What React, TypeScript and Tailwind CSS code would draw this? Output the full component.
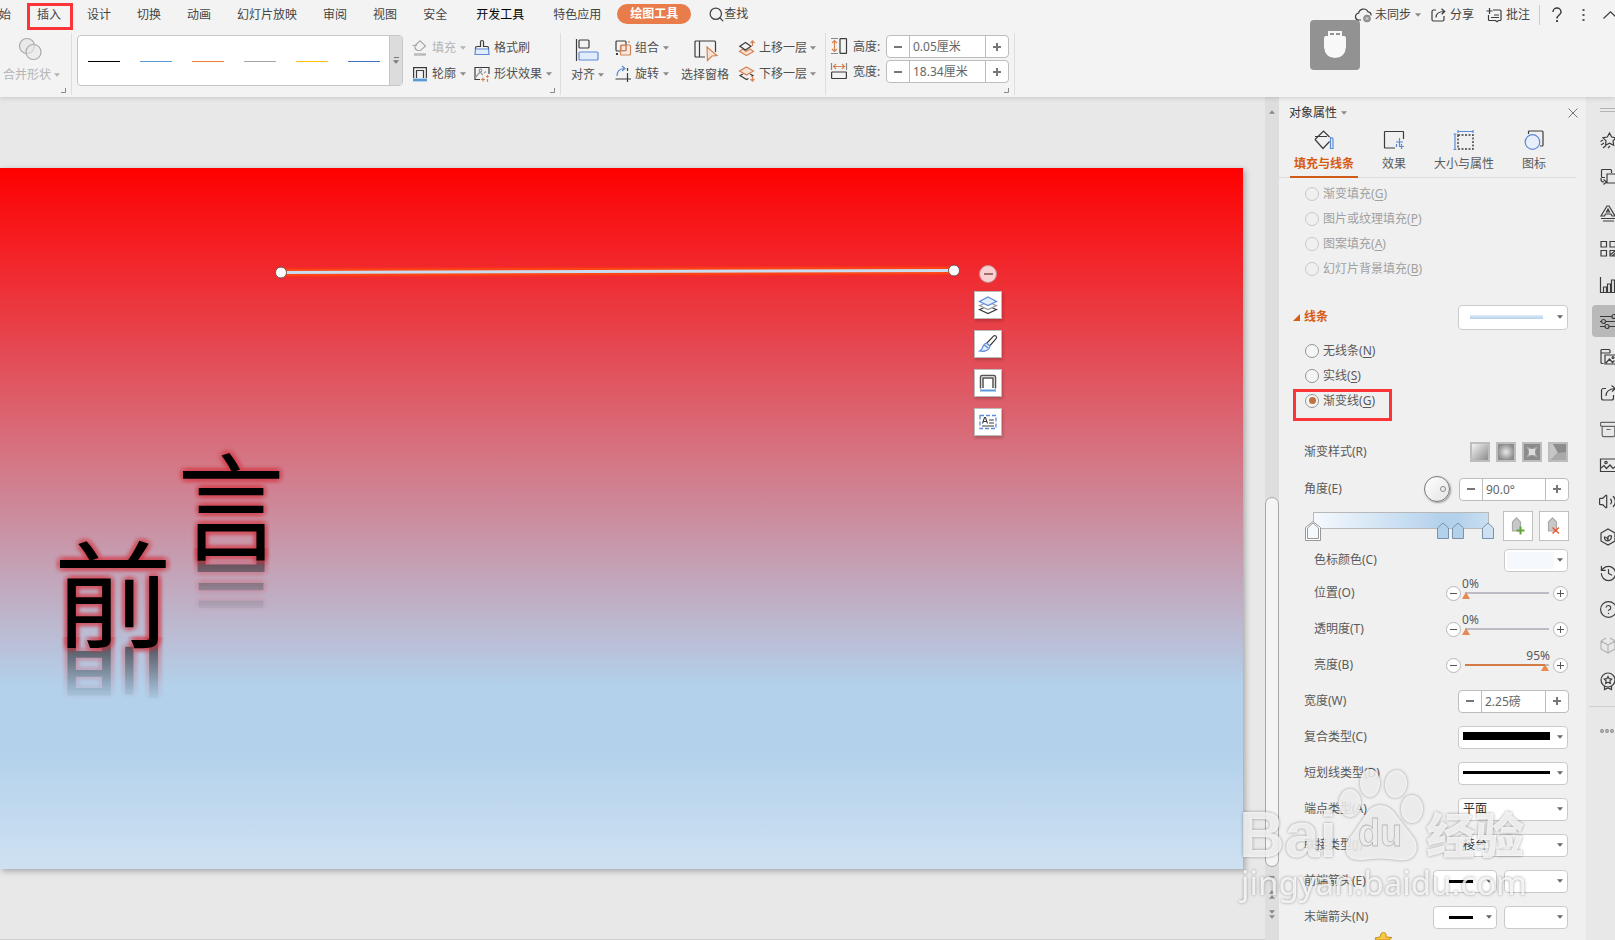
import type { ReactNode } from "react";
import { Archive, CircleHelp, History, Search, Volume2 } from "lucide-react";

const FONT = "font-['Noto_Sans','Noto_Sans_CJK_SC',sans-serif]";

function Caret({className = "text-[#8a8a8a]"}: {className?: string}) {
  return (
    <svg width="6" height="4" viewBox="0 0 6 4" className={`shrink-0 ${className}`}>
      <path d="M0 0.3h6L3 3.8z" fill="currentColor" />
    </svg>
  );
}

function Svg({w = 16, h = 16, className = "", children}: {w?: number; h?: number; className?: string; children: ReactNode}) {
  return (
    <svg
      width={w}
      height={h}
      viewBox={`0 0 ${w} ${h}`}
      fill="none"
      stroke="#3c3c3c"
      strokeWidth="1.2"
      className={`shrink-0 overflow-visible ${className}`}
    >
      {children}
    </svg>
  );
}

function Corner() {
  return (
    <svg width="5" height="5" viewBox="0 0 5 5" className="absolute bottom-[2px] right-[5px]">
      <path d="M4.5 0v4.5H0" fill="none" stroke="#888" />
    </svg>
  );
}

function Plus({size = 9, className = "bg-[#777]"}: {size?: number; className?: string}) {
  return (
    <span className="relative block shrink-0" style={{width: size, height: size}}>
      <span className={`absolute inset-x-0 top-[calc(50%-1px)] h-[2px] ${className}`} />
      <span className={`absolute inset-y-0 left-[calc(50%-1px)] w-[2px] ${className}`} />
    </span>
  );
}

function Spinner({value, className}: {value: string; className: string}) {
  return (
    <div className={`flex h-[23px] shrink-0 rounded-[4px] border border-[#bdbdbd] bg-white text-[#666] ${className}`}>
      <span className="flex w-[23px] items-center justify-center border-r border-[#bdbdbd]">
        <span className="h-[2px] w-[8px] bg-[#777]" />
      </span>
      <span className="flex-1 pl-[3px] leading-[21px]">{value}</span>
      <span className="flex w-[23px] items-center justify-center border-l border-[#bdbdbd]">
        <Plus size={8} />
      </span>
    </div>
  );
}

const tabs = [
  {name: "插入", cls: "ml-[26px]"},
  {name: "设计", cls: "ml-[26px]"},
  {name: "切换", cls: "ml-[26px]"},
  {name: "动画", cls: "ml-[26px]"},
  {name: "幻灯片放映", cls: "ml-[26px]"},
  {name: "审阅", cls: "ml-[26px]"},
  {name: "视图", cls: "ml-[26px]"},
  {name: "安全", cls: "ml-[26px]"},
  {name: "开发工具", cls: "ml-[29px] text-black"},
  {name: "特色应用", cls: "ml-[29px]"},
];

function MenuBar() {
  return (
    <div className="flex h-[30px] items-center whitespace-nowrap text-[#444]">
      <span className="-ml-px">始</span>
      {tabs.map((t, i) => (
        <span key={t.name} className={`relative ${t.cls}`}>
          {t.name}
          {i === 0 && <span className="absolute -left-[10px] -top-[3px] h-[27px] w-[46px] border-[3px] border-[#fb3538]" />}
        </span>
      ))}
      <span className="-mt-[2px] ml-4 h-5 w-[74px] rounded-full bg-[#e87c4a] text-center font-bold leading-5 text-white">
        绘图工具
      </span>
      <Search size={17} strokeWidth={1.8} className="-mt-[2px] ml-[17px] text-[#444]" />
      <span className="-mt-[2px] -ml-px">查找</span>

      <div className="ml-auto flex items-center">
        <Svg w={17} h={14}>
          <path d="M6 12H4.200A3.400 3.400 0 0 1 3.600 5.200 5 5 0 0 1 13 3.800 3.400 3.400 0 0 1 16 7.500" />
          <circle cx="12" cy="10.500" r="3.200" fill="#999" stroke="#888" />
          <path d="M10.800 9.300l2.400 2.400m0-2.400l-2.400 2.400" stroke="#f3f3f3" strokeWidth="0.800" />
        </Svg>
        <span className="ml-[3px]">未同步</span>
        <Caret className="ml-1 text-[#8a8a8a]" />
        <Svg w={15} h={14} className="ml-[10px]">
          <path d="M5 2H2.500A1.500 1.500 0 0 0 1 3.500v8A1.500 1.500 0 0 0 2.500 13h9a1.500 1.500 0 0 0 1.500-1.500V8M5 9.500C5 6 7.500 3.500 13.500 3.500M10.500 0.800l3.200 2.700-3 2.700" />
        </Svg>
        <span className="ml-1">分享</span>
        <Svg w={16} h={14} className="ml-[12px]">
          <path d="M7 2h7a1 1 0 0 1 1 1v8.500a1 1 0 0 1-1 1h-1.500l-1.500 1.200-1.500-1.200H3.500a1 1 0 0 1-1-1V7M3.500 0v6M0.500 3h6M5 9.500h8M8 7h5" />
        </Svg>
        <span className="ml-[4px]">批注</span>
        <span className="ml-[9px] h-5 w-px bg-[#ccc]" />
        <Svg w={10} h={14} className="ml-[12px]">
          <path d="M1 4A4 4 0 0 1 9 4C9 7 5 7 5 10.500" strokeWidth="1.500" />
          <path d="M5 12v2" strokeWidth="1.800" />
        </Svg>
        <Svg w={3} h={12} className="ml-[20px]">
          <path d="M0.500 1h2M0.500 6h2M0.500 11h2" strokeWidth="2" stroke="#555" />
        </Svg>
        <Svg w={14} h={8} className="-mr-[2px] ml-[18px]">
          <path d="M0.500 7.500L7.500 0.800l7 6.700" />
        </Svg>
      </div>
    </div>
  );
}

const lineColors = ["bg-black", "bg-[#5b9bd5]", "bg-[#ed7d31]", "bg-[#a5a5a5]", "bg-[#ffc000]", "bg-[#4472c4]"];

function LayerIcon({down = false}: {down?: boolean}) {
  return down ? (
    <Svg>
      <path d="M4 8L1 9.500l6.500 4 2-1M11 8l3 1.500-1.500 1" />
      <path d="M7.500 1l7 4-7 4-7-4z" fill="#f8e2d6" stroke="#d48453" />
      <path d="M13.500 10v5M11.500 13l2 2.200 2-2.200" stroke="#d48453" />
    </Svg>
  ) : (
    <Svg>
      <path d="M4 9l-3.500 2.500 7 4 7-4L11 9l-4 2.500z" fill="#f8e2d6" stroke="#d48453" />
      <path d="M6.500 2.500l5.500 3.800-5.500 3.800L0.800 6.300z" />
      <path d="M13.500 6V0.800M11.500 3l2-2.200 2 2.200" stroke="#d48453" />
    </Svg>
  );
}

function Ribbon() {
  return (
    <div className="flex h-[67px] whitespace-nowrap pt-[3px] text-[#505050]">
      <div className="relative h-[62px] w-[72px] border-r border-[#dedede] text-[#b4b4b4]">
        <Svg w={24} h={24} className="ml-[18px] mt-[4px]">
          <circle cx="9" cy="9" r="7.500" stroke="#aaa" fill="#e9e9e9" />
          <circle cx="15.500" cy="15" r="7.500" stroke="#aaa" fill="#e9e9e9" fillOpacity="0.600" />
        </Svg>
        <div className="mt-[6px] flex items-center gap-[3px] pl-[3px] leading-4">
          合并形状
          <Caret className="text-[#b4b4b4]" />
        </div>
        <Corner />
      </div>

      <div className="relative flex h-[62px] w-[489px] border-r border-[#dedede]">
        <div className="ml-[5px] mt-[2px] flex h-[51px] w-[326px] overflow-hidden rounded-[4px] border border-[#c6c6c6] bg-white">
          <div className="flex flex-1 items-center gap-[20px] pl-[10px]">
            {lineColors.map((c) => (
              <span key={c} className={`mt-[2px] h-px w-[32px] ${c}`} />
            ))}
          </div>
          <div className="flex w-[13px] flex-col items-center justify-center gap-[2px] border-l border-[#c6c6c6] bg-[#dcdcdc]">
            <span className="h-px w-[5px] bg-[#777]" />
            <Caret className="text-[#777]" />
          </div>
        </div>
        <div className="ml-[9px] mt-[2px] flex flex-col">
          <div className="flex h-[26px] items-center">
            <span className="flex w-[62px] items-center text-[#b4b4b4]">
              <Svg>
                <path d="M3 5.500L8 0.800l5.500 5.200-5 4.500H5.500A4.500 4.500 0 0 1 3 5.500M0.500 5.500H5" stroke="#aaa" />
                <path d="M2 14.500h12" stroke="#bbb" strokeWidth="2.500" />
              </Svg>
              <span className="ml-[4px] mr-[4px]">填充</span>
              <Caret className="text-[#b4b4b4]" />
            </span>
            <Svg>
              <path d="M1.500 9.500V8q0-1.500 1.500-1.500h3.500V2a1.500 1.500 0 0 1 3 0v4.500H13q1.500 0 1.500 1.500v1.500" />
              <path d="M1.500 9h13l0.500 5.500H1z" fill="#e2ecfa" stroke="#5b8ad8" />
            </Svg>
            <span className="ml-[4px]">格式刷</span>
          </div>
          <div className="flex h-[26px] items-center">
            <span className="flex w-[62px] items-center">
              <Svg>
                <path d="M1.600 12V1.600h12.800V12M4.500 12V4.500h7V12" strokeWidth="1.200" />
                <path d="M1 14h14" stroke="#5b9bd5" strokeWidth="2.800" />
              </Svg>
              <span className="ml-[4px] mr-[4px]">轮廓</span>
              <Caret />
            </span>
            <Svg>
              <path d="M6 13.500H1V1.500h14V8" />
              <path d="M1 12l5-6 3 3M10 7l2-1.500" stroke="#999" />
              <circle cx="6.500" cy="4.500" r="1.300" stroke="#999" />
              <path d="M9 11.500v4M7 13.500h4M13.500 9v3M12 10.500h3M13.500 13v3" stroke="#d48453" />
            </Svg>
            <span className="ml-[4px] mr-[4px]">形状效果</span>
            <Caret />
          </div>
        </div>
        <Corner />
      </div>

      <div className="flex h-[62px] w-[265px] border-r border-[#dedede]">
        <div className="ml-[10px] w-[44px]">
          <Svg w={24} h={24} className="ml-[4px] mt-[5px]">
            <path d="M1.500 1v22" />
            <rect x="4" y="2" width="10" height="8" rx="1" />
            <rect x="4" y="14" width="19" height="8" rx="1" fill="#e2ecfa" stroke="#5b8ad8" />
          </Svg>
          <div className="mt-[5px] flex items-center gap-[3px] leading-4">
            对齐
            <Caret />
          </div>
        </div>
        <div className="mt-[2px] w-[66px]">
          <div className="flex h-[26px] items-center">
            <Svg>
              <rect x="1" y="1" width="10" height="10" rx="1" />
              <rect x="5.500" y="5" width="10" height="10" rx="1" stroke="#d48453" fill="#f8e2d6" fillOpacity="0.600" />
              <path d="M6 5.500h5v5H6zM14 1v2" stroke="#d48453" />
              <path d="M1 14h2" strokeWidth="2" />
            </Svg>
            <span className="ml-[4px] mr-[4px]">组合</span>
            <Caret />
          </div>
          <div className="flex h-[26px] items-center">
            <Svg>
              <path d="M0.500 13H16M12.500 2v3M12.500 7v9" />
              <path d="M2 10q0-7 7-7.500M7 0l3 2.500L7 5" stroke="#5b8ad8" />
            </Svg>
            <span className="ml-[4px] mr-[4px]">旋转</span>
            <Caret />
          </div>
        </div>
        <div className="w-[58px]">
          <Svg w={24} h={24} className="ml-[13px] mt-[6px]">
            <path d="M11 18H2q-1 0-1-1V3q0-1 1-1h18.500q1 0 1 1v10M5.500 2v16" />
            <path d="M13 8l10 8.500-5 0.500-4.500 4.500z" fill="#f8e2d6" stroke="#d48453" />
          </Svg>
          <div className="mt-[4px] leading-4">选择窗格</div>
        </div>
        <div className="mt-[2px]">
          <div className="flex h-[26px] items-center">
            <LayerIcon />
            <span className="ml-[4px] mr-[3px]">上移一层</span>
            <Caret />
          </div>
          <div className="flex h-[26px] items-center">
            <LayerIcon down />
            <span className="ml-[4px] mr-[3px]">下移一层</span>
            <Caret />
          </div>
        </div>
      </div>

      <div className="relative h-[62px] w-[189px] border-r border-[#dedede] pl-[5px] pt-[2px]">
        <div className="flex h-[25px] items-start">
          <Svg className="mt-[3px]">
            <path d="M0 0.500h7M0 15.500h7" stroke="#888" />
            <path d="M3.500 2.500v11M1 5l2.500-2.500L6 5M1 11l2.500 2.500L6 11" stroke="#d48453" />
            <rect x="9" y="0.600" width="6.500" height="14.800" rx="0.500" />
          </Svg>
          <span className="ml-[6px] w-[33px] leading-[23px]">高度:</span>
          <Spinner value="0.05厘米" className="w-[123px]" />
        </div>
        <div className="flex h-[25px] items-start">
          <Svg className="mt-[3px]">
            <path d="M0.500 0v7M15.500 0v7" stroke="#888" />
            <path d="M2.500 3.500h11M5 1L2.500 3.500 5 6M11 1l2.500 2.500L11 6" stroke="#d48453" />
            <rect x="0.600" y="9" width="14.800" height="6.500" rx="0.500" />
          </Svg>
          <span className="ml-[6px] w-[33px] leading-[23px]">宽度:</span>
          <Spinner value="18.34厘米" className="w-[123px]" />
        </div>
        <Corner />
      </div>
    </div>
  );
}

const glow = {
  textShadow: [
    "4px 0 3px rgba(212,50,62,.26)",
    "-4px 0 3px rgba(212,50,62,.26)",
    "0 4px 3px rgba(212,50,62,.26)",
    "0 -4px 3px rgba(212,50,62,.26)",
    "3px 3px 3px rgba(212,50,62,.26)",
    "-3px 3px 3px rgba(212,50,62,.26)",
    "3px -3px 3px rgba(212,50,62,.26)",
    "-3px -3px 3px rgba(212,50,62,.26)",
  ].join(","),
};

// one heading character with its mirrored copy starting at the axis line
function WordArt({char, className, axis}: {char: string; className: string; axis: number}) {
  return (
    <div className={`absolute w-[116px] text-center text-[116px] font-normal leading-[116px] text-black ${className}`}>
      <div
        className="absolute -inset-x-3 h-[72px] overflow-hidden opacity-60"
        style={{top: axis, maskImage: "linear-gradient(to bottom, #000 4px, transparent 66px)"}}
        aria-hidden
      >
        <div className="-scale-y-100" style={{marginTop: axis - 116, ...glow}}>
          {char}
        </div>
      </div>
      <div className="relative" style={glow}>
        {char}
      </div>
    </div>
  );
}

function FloatButton({children}: {children: ReactNode}) {
  return (
    <div className="flex size-[28px] items-center justify-center border border-[#bbb] bg-white shadow-[1px_2px_3px_rgba(0,0,0,0.2)]">
      {children}
    </div>
  );
}

function Canvas() {
  return (
    <div className="flex w-[1265px] shrink-0 flex-col border-b border-[#cfcfcf] bg-[#e8e8e8] pt-[71px]">
      <div className="relative h-[701px] w-[1243px] bg-[linear-gradient(to_bottom,#ff0000_0%,#b3d1eb_74%,#b3d1eb_83%,#cee1f2_100%)] shadow-[2px_2px_6px_rgba(0,0,0,0.3)]">
        <svg width="700" height="24" viewBox="0 0 700 24" className="absolute left-[268px] top-[91px]">
          <path d="M12 13.500L686 11.500" stroke="#ff3a14" strokeWidth="10" opacity="0.450" />
          <path d="M12 13.500L686 11.500" stroke="#ff4a14" strokeWidth="7" opacity="0.850" />
          <path d="M12 13.500L686 11.500" stroke="#c9dcf0" strokeWidth="3" />
          <circle cx="13" cy="13.500" r="5.500" fill="#fff" stroke="#6b5050" />
          <circle cx="686" cy="11.500" r="5.500" fill="#fff" stroke="#6b5050" />
        </svg>

        <WordArt char="言" className="left-[173px] top-[280px] scale-x-[0.925]" axis={100} />
        <WordArt char="前" className="left-[55px] top-[368px] scale-x-[1.02]" axis={101} />

        <div className="absolute left-[974px] top-[97px] flex flex-col items-center">
          <span className="flex size-[18px] items-center justify-center rounded-full border border-[#c09090] bg-[#fbd0d2]">
            <span className="h-[2px] w-[9px] bg-[#a07070]" />
          </span>
          <div className="mt-[8px] flex flex-col gap-[11px]">
            <FloatButton>
              <Svg w={18} h={18}>
                <path d="M4.500 12L0.500 13.500l8.500 4 8.500-4-4-1.500" />
                <path d="M4.500 8L0.500 9.500l8.500 4 8.500-4-4-1.500" stroke="#999" />
                <path d="M9 1l8.500 4.500L9 9.500 0.500 5.500z" fill="#e2ecfa" stroke="#5b8ad8" />
              </Svg>
            </FloatButton>
            <FloatButton>
              <Svg w={18} h={18}>
                <path d="M8 8l6.500-6.800a1.700 1.700 0 0 1 2.600 2.400L11 10.500" />
                <path d="M7.500 8l3.500 3-1 2.500Q7 17.500 0.500 16q3-1.500 3.200-4Q5 8.500 7.500 8zM5.500 10l3.500 3" fill="#e2ecfa" stroke="#5b8ad8" />
              </Svg>
            </FloatButton>
            <FloatButton>
              <Svg w={18} h={18}>
                <path d="M1.500 14.500V3q0-1.500 1.500-1.500h12q1.500 0 1.500 1.500v11.500M4 14V4h10v10" strokeWidth="1.500" stroke="#555" />
                <path d="M1 16.500h16" stroke="#5b9bd5" strokeWidth="2" />
              </Svg>
            </FloatButton>
            <FloatButton>
              <Svg w={18} h={18}>
                <rect x="1" y="2.500" width="16" height="13" stroke="#5b8ad8" strokeWidth="1.300" strokeDasharray="4 2" />
                <path d="M3.500 10.500l2-6h1l2 6M4.500 8.500h3M10 7h5M10 10h5M3 13h12" strokeWidth="1.100" />
              </Svg>
            </FloatButton>
          </div>
        </div>
      </div>
    </div>
  );
}

function ScrollBar() {
  return (
    <div className="flex w-[14px] shrink-0 flex-col items-center bg-[#dedede] pt-[13px] text-[#888]">
      <Caret className="rotate-180" />
      <div className="mt-[383px] h-[370px] w-[14px] shrink-0 rounded-full border border-[#a8a8a8] bg-[#f4f4f4]" />
      <Caret className="mt-[9px] text-[#888]" />
      <div className="mt-[10px] flex rotate-180 flex-col gap-px">
        <Caret />
        <Caret />
      </div>
      <div className="mt-[11px] flex flex-col gap-px">
        <Caret />
        <Caret />
      </div>
    </div>
  );
}

function RadioRow({label, hotkey, disabled = false, checked = false, children}: {
  label: string;
  hotkey: string;
  disabled?: boolean;
  checked?: boolean;
  children?: ReactNode;
}) {
  return (
    <div className={`relative flex h-[25px] items-center pl-[26px] ${disabled ? "text-[#a0a0a0]" : "text-[#5a5a5a]"}`}>
      <span
        className={`flex size-[14px] items-center justify-center rounded-full border ${
          disabled ? "border-[#c8c8c8]" : "border-[#959595] bg-[#f6f6f6]"
        }`}
      >
        {checked && <span className="size-[7px] rounded-full bg-[#c0713f]" />}
      </span>
      <span className="ml-[4px]">
        {label}(<span className="underline underline-offset-2">{hotkey}</span>)
      </span>
      {children}
    </div>
  );
}

function Row({label, indent = false, className = "h-[36px]", children}: {
  label: string;
  indent?: boolean;
  className?: string;
  children: ReactNode;
}) {
  return (
    <div className={`flex shrink-0 items-center pr-[18px] text-[#5a5a5a] ${indent ? "pl-[35px]" : "pl-[25px]"} ${className}`}>
      <span className="mr-auto">{label}</span>
      {children}
    </div>
  );
}

function Select({className = "w-[110px]", children}: {className?: string; children?: ReactNode}) {
  return (
    <div className={`flex h-[23px] shrink-0 items-center rounded-[4px] border border-[#cacaca] bg-white pl-[4px] pr-[4px] text-[#333] ${className}`}>
      {children}
      <Caret className="ml-auto text-[#666]" />
    </div>
  );
}

function Slider({value}: {value: number}) {
  const btn = "flex size-[15px] items-center justify-center rounded-full border border-[#b8b8b8] bg-white";
  return (
    <div className="flex items-center">
      <span className={btn}>
        <span className="h-px w-[7px] bg-[#555]" />
      </span>
      <div className="relative mx-[4px] h-[2px] w-[84px] bg-[#bcbcc4]">
        <div className="h-full bg-[#d27b45]" style={{width: `${value}%`}} />
        <span className={`absolute top-[-15px] leading-[14px] ${value > 50 ? "-right-px" : "-left-[3px]"}`}>{value}%</span>
        <svg width="8" height="7" viewBox="0 0 8 7" className="absolute top-0" style={{left: value * 0.83 - 3}}>
          <path d="M4 0l4 7H0z" fill="#e58b52" />
        </svg>
      </div>
      <span className={btn}>
        <Svg w={7} h={7}>
          <path d="M0 3.500h7M3.500 0v7" strokeWidth="1" stroke="#555" />
        </Svg>
      </span>
    </div>
  );
}

const panelTabs = [
  {
    name: "填充与线条",
    icon: (
      <Svg w={20} h={20}>
        <path d="M1 9.500L9.500 1l6 6M1 9.500l8 9 6.500-7M1 6.500h12" />
        <path d="M16.500 7.500q3 0 2.500 3v8h-2.500z" stroke="#5b8ad8" />
      </Svg>
    ),
  },
  {
    name: "效果",
    icon: (
      <Svg w={20} h={20}>
        <path d="M11 18H1q-0.500 0-0.500-0.500V2Q0.500 1.500 1 1.500h18q0.500 0 0.500 0.500v7" />
        <path d="M15.500 8v8M12 12h7M17.500 14v5M15 16.500h5M12.500 14v3" stroke="#5b8ad8" />
      </Svg>
    ),
  },
  {
    name: "大小与属性",
    icon: (
      <Svg w={20} h={20}>
        <rect x="4" y="5" width="15" height="14" strokeDasharray="2 1.500" strokeWidth="1.400" />
        <path d="M4 1.500h15M4 0v3M19 0v3M1 4v15.500M-0.500 4h3M-0.500 19.500h3" stroke="#5b8ad8" />
      </Svg>
    ),
  },
  {
    name: "图标",
    icon: (
      <Svg w={20} h={20}>
        <path d="M4.500 4V2q0-1 1-1H18q1 0 1 1v13q0 1-1 1h-2" />
        <circle cx="8.500" cy="12" r="7.300" stroke="#5b8ad8" fill="#e8effb" />
      </Svg>
    ),
  },
];

function Swatches() {
  const box = "size-[20px] border-2 border-[#bdbdbd]";
  return (
    <>
      <span className={`${box} bg-[linear-gradient(135deg,#f2f2f2,#8c8c8c)]`} />
      <span className={`${box} bg-[radial-gradient(circle,#e8e8e8,#8c8c8c_75%)]`} />
      <svg width="20" height="20" viewBox="0 0 20 20" className="shrink-0">
        <path d="M0 0h20v20H0z" fill="#bdbdbd" />
        <path d="M2 2h16v16H2z" fill="#8c8c8c" />
        <path d="M4.500 4.500L10 7l5.500-2.500L13 10l2.500 5.500L10 13l-5.500 2.500L7 10z" fill="#b4b4b4" />
        <path d="M7 7h6v6H7z" fill="#dcdcdc" />
      </svg>
      <svg width="20" height="20" viewBox="0 0 20 20" className="shrink-0">
        <path d="M0 0h20v20H0z" fill="#bdbdbd" />
        <path d="M2 2h16v16H2z" fill="#a9a9a9" />
        <path d="M2 2h3l5 8-8 8z" fill="#c6c6c6" />
        <path d="M5 2h13v8l-8 1z" fill="#8c8c8c" />
      </svg>
    </>
  );
}

function GradientStop({className, active = false}: {className: string; active?: boolean}) {
  return (
    <svg width="16" height="20" viewBox="0 0 16 20" className={`absolute ${className}`}>
      {active && <path d="M0.500 19.500V6.500L8 0.500l7.500 6v13z" fill="#fff" stroke="#999" />}
      <path d="M2.500 17.500V7L8 2l5.500 5v10.500z" fill="currentColor" stroke={active ? "#999" : "#7a93ab"} />
    </svg>
  );
}

function StopButton({remove = false}: {remove?: boolean}) {
  return (
    <span className="ml-[6px] flex size-[30px] shrink-0 items-center justify-center border border-[#c0c0c0] bg-white">
      <Svg w={14} h={18}>
        <path d="M1.500 14V5L5.500 0.800 9.500 5v9z" fill="#c8c8c8" stroke="#aaa" />
        {remove ? (
          <path d="M5.500 10.500l6.500 6M12 10.500l-6.500 6" stroke="#f0532d" strokeWidth="1.300" />
        ) : (
          <path d="M9.500 9.500v8M5.500 13.500h8" stroke="#62a63a" strokeWidth="2" />
        )}
      </Svg>
    </span>
  );
}

function PropertyPanel() {
  return (
    <div className="flex w-[307px] shrink-0 flex-col overflow-hidden bg-[#f0f0f0]">
      <div className="flex h-[31px] shrink-0 items-center pl-[10px] pr-[8px] text-[#333]">
        对象属性
        <Caret className="ml-[4px] text-[#8a8a8a]" />
        <Svg w={10} h={10} className="ml-auto">
          <path d="M0.500 0.500l9 9M9.500 0.500l-9 9" stroke="#777" strokeWidth="1" />
        </Svg>
      </div>
      <div className="mr-[10px] flex h-[50px] shrink-0 pl-[10px] shadow-[inset_0_-1px_0_#dcdcdc]">
        {panelTabs.map((t, i) => (
          <div key={t.name} className="flex w-[70px] shrink-0 flex-col items-center pt-[2px] text-[#5a5a5a]">
            {t.icon}
            <span className={`mt-[6px] leading-4 ${i === 0 ? "font-bold text-[#d75b13]" : ""}`}>{t.name}</span>
            {i === 0 && <span className="mt-auto h-[2px] w-[68px] bg-[#d05a17]" />}
          </div>
        ))}
      </div>

      <div className="pt-[3px]">
        <RadioRow label="渐变填充" hotkey="G" disabled />
        <RadioRow label="图片或纹理填充" hotkey="P" disabled />
        <RadioRow label="图案填充" hotkey="A" disabled />
        <RadioRow label="幻灯片背景填充" hotkey="B" disabled />
      </div>

      <div className="mt-[18px] flex h-[36px] shrink-0 items-center pl-[14px] pr-[18px] font-bold text-[#d75b13]">
        <Svg w={7} h={7} className="mr-[4px]">
          <path d="M7 0v7H0z" fill="#d75b13" stroke="none" />
        </Svg>
        线条
        <div className="ml-auto flex h-[25px] w-[110px] items-center rounded-[4px] border border-[#cacaca] bg-white pl-[11px] pr-[4px]">
          <span className="h-[4px] w-[73px] bg-[linear-gradient(#e2edf7,#b3d0ea)]" />
          <Caret className="ml-auto text-[#666]" />
        </div>
      </div>
      <div className="mt-[3px]">
        <RadioRow label="无线条" hotkey="N" />
        <RadioRow label="实线" hotkey="S" />
        <RadioRow label="渐变线" hotkey="G" checked>
          <span className="absolute left-[14px] top-px h-[32px] w-[99px] border-[3px] border-[#fb3538]" />
        </RadioRow>
      </div>

      <Row label="渐变样式(R)" className="mt-[21px] h-[36px] gap-[6px]">
        <Swatches />
      </Row>
      <Row label="角度(E)" className="mt-px h-[36px]">
        <span className="mr-[9px] flex size-[26px] items-center justify-end rounded-full border border-[#777] bg-[linear-gradient(135deg,#fff,#e4e4e4)] pr-[3px] shadow-[1px_1px_2px_rgba(0,0,0,0.35)]">
          <span className="size-[6px] rounded-full border border-[#888]" />
        </span>
        <Spinner value="90.0°" className="-mr-px w-[110px]" />
      </Row>
      <div className="mt-[4px] flex h-[30px] shrink-0 pl-[34px]">
        <div className="relative mr-[8px] mt-px h-[17px] w-[176px] border border-[#b8b8b8] bg-[linear-gradient(to_right,#f5f9fe,#b3d1eb_74%,#b3d1eb_82%,#c9def1)]">
          <GradientStop active className="-left-[9px] top-[8px] text-[#f4f9fe]" />
          <GradientStop className="left-[121px] top-[8px] text-[#b3d1eb]" />
          <GradientStop className="left-[136px] top-[8px] text-[#b3d1eb]" />
          <GradientStop className="left-[166px] top-[8px] text-[#cee1f2]" />
        </div>
        <StopButton />
        <StopButton remove />
      </div>
      <Row label="色标颜色(C)" indent className="mt-[4px] h-[30px]">
        <Select className="w-[64px]">
          <span className="-ml-[2px] h-[17px] w-[47px] bg-[#f5f9fe]" />
        </Select>
      </Row>
      <Row label="位置(O)" indent>
        <Slider value={0} />
      </Row>
      <Row label="透明度(T)" indent>
        <Slider value={0} />
      </Row>
      <Row label="亮度(B)" indent>
        <Slider value={95} />
      </Row>
      <Row label="宽度(W)">
        <Spinner value="2.25磅" className="-mr-px w-[111px]" />
      </Row>
      <Row label="复合类型(C)">
        <Select>
          <span className="-mt-[2px] h-[8px] w-[87px] bg-black" />
        </Select>
      </Row>
      <Row label="短划线类型(D)">
        <Select>
          <span className="-mt-[2px] h-[3px] w-[87px] bg-black" />
        </Select>
      </Row>
      <Row label="端点类型(A)">
        <Select>平面</Select>
      </Row>
      <Row label="联接类型(J)">
        <Select>棱台</Select>
      </Row>
      <Row label="前端箭头(E)">
        <Select className="mr-[7px] w-[64px]">
          <span className="ml-[11px] h-[3px] w-[24px] bg-black" />
        </Select>
        <Select className="w-[64px]" />
      </Row>
      <Row label="末端箭头(N)">
        <Select className="mr-[7px] w-[64px]">
          <span className="ml-[11px] h-[3px] w-[24px] bg-black" />
        </Select>
        <Select className="w-[64px]" />
      </Row>
    </div>
  );
}

const lucide = {size: 19, strokeWidth: 1.5};

const sideIcons: ReactNode[] = [
  <Svg w={20} h={18}>
    <path d="M9.500 1l2.200 4 4.300 0.700-3 3.200 0.600 4.300-4.100-2-4 2 0.500-4.300-3-3.200L7.300 5zM0.500 9.500L3 8M1 13l3-2M3 16l3-2.500M8 16l2-2" />
  </Svg>,
  <Svg w={20} h={18}>
    <path d="M5 9.500H2.500a1 1 0 0 1-1-1v-6a1 1 0 0 1 1-1h8a1 1 0 0 1 1 1V5M7 6h11v9H7zM1 10v1.500q0 2.500 3 2.500M3.500 11.500L6.500 14l-3 2.500" />
  </Svg>,
  <Svg w={18} h={18}>
    <path d="M1 12L7 2h2l6 10h-3l-1-2H5.500l-1 2zM6.500 8L8 5l1.500 3zM1 14.500h15M3 17h11" />
  </Svg>,
  <Svg w={18} h={18}>
    <path d="M1 1.500h5.500V7H1zM10 1.500h5.500V7H10zM1 10.500h5.500V16H1zM10 10.500h5.500V16H10zM10 15l5-4M12 16l3.500-3" />
  </Svg>,
  <Svg w={20} h={18}>
    <path d="M0.500 1v15.500H18M3.500 16v-5h3v5M7.500 16V8h3v8M11.500 16V4h3v12" />
  </Svg>,
  <Svg w={20} h={18}>
    <path d="M0 4.500h12M0 9.500h1.500M5.500 9.500H18M0 14.500h5M9 14.500h9" />
    <circle cx="14" cy="4.500" r="2" />
    <circle cx="3.500" cy="9.500" r="2" />
    <circle cx="7" cy="14.500" r="2" />
  </Svg>,
  <Svg w={20} h={18}>
    <path d="M3.500 15.500H2a1 1 0 0 1-1-1V2.500a1 1 0 0 1 1-1h7a1 1 0 0 1 1 1V5M1 5h9M5 7h13v9H5zM6 15l3.500-4 3 3.500 2-2" />
    <circle cx="13" cy="9.500" r="1" />
  </Svg>,
  <Svg w={18} h={18}>
    <path d="M6 4.500H3.500a2 2 0 0 0-2 2V14a2 2 0 0 0 2 2h8a2 2 0 0 0 2-2v-3M6 12C6 7.500 8.500 5 15 4.500M11.500 1.500L15.500 4.500l-3.500 3" />
  </Svg>,
  <Archive {...lucide} className="-ml-px shrink-0 text-[#666]" />,
  <Svg w={20} h={18}>
    <path d="M0.500 3h18v12.500H0.500zM1 12l3-2.500 2.500 3L10 9l3 3.500 3-2.500" />
    <circle cx="6" cy="6.500" r="1.200" />
  </Svg>,
  <Volume2 {...lucide} className="-ml-[2px] shrink-0" />,
  <Svg w={18} h={18}>
    <path d="M8 1l7 4v8l-7 4-7-4V5zM8 13V8M8 13q-3.500 0-3.500-4Q8 9.500 8 13zM8 13q3.500-1 3.500-5Q9 7 8 9" />
  </Svg>,
  <History {...lucide} className="-ml-px shrink-0" />,
  <CircleHelp {...lucide} className="-ml-px shrink-0" />,
  <Svg w={18} h={18}>
    <path d="M1 5l5-3M10 2l5 3M1 5v8l7 4 7-4V5M1 5l7 4 7-4M8 9v8" stroke="#b4b4b4" />
  </Svg>,
  <Svg w={18} h={18}>
    <circle cx="8" cy="8" r="7" />
    <path d="M8 4.500l1.200 2.200 2.500 0.400-1.800 1.800 0.400 2.500L8 10.300l-2.300 1.100 0.400-2.500-1.800-1.800 2.500-0.400zM4.500 14v3.500L8 16l3.500 1.500V14" />
  </Svg>,
];

function SideBar() {
  return (
    <div className="flex w-[29px] shrink-0 flex-col overflow-hidden bg-[#e8e8e8] text-[#3c3c3c]">
      <div className="ml-[14px] mt-[11px] h-[4px] shrink-0 border-y border-[#b4b4b4]" />
      <div className="mt-[11px]">
        {sideIcons.map((icon, i) => (
          <div key={i} className="flex h-[36px] items-center pl-[6px]">
            <div className={`flex h-[32px] w-[23px] items-center rounded-l-[4px] pl-[8px] ${i === 5 ? "bg-[#b9b9b9]" : ""}`}>
              {icon}
            </div>
          </div>
        ))}
      </div>
      <div className="ml-[3px] mt-[7px] h-px shrink-0 bg-[#cfcfcf]" />
      <Svg w={16} h={4} className="ml-[14px] mt-[22px]">
        <circle cx="2" cy="2" r="1.300" stroke="#888" />
        <circle cx="7" cy="2" r="1.300" stroke="#888" />
        <circle cx="12" cy="2" r="1.300" stroke="#888" />
      </Svg>
    </div>
  );
}

function Watermark() {
  return (
    <svg
      width="300"
      height="150"
      viewBox="0 0 300 150"
      className="pointer-events-none absolute left-[1235px] top-[766px] [filter:drop-shadow(0_0_1.5px_rgba(0,0,0,0.45))]"
      fill="#fff"
      fillOpacity="0.800"
    >
      <text x="4" y="91" fontSize="64" fontWeight="700" fontFamily="Liberation Sans" textLength="98" lengthAdjust="spacingAndGlyphs">
        Bai
      </text>
      <ellipse cx="115" cy="37" rx="11" ry="14" />
      <ellipse cx="135" cy="17" rx="10" ry="14" />
      <ellipse cx="161" cy="18" rx="11" ry="14" transform="rotate(8 161 18)" />
      <ellipse cx="177" cy="43" rx="11" ry="14" />
      <path
        fillRule="evenodd"
        d="M145 39q10 0 16 10l15 19q8 9 5 18-4 10-18 8-18-3-36 0-14 1-16-9-2-8 6-16l13-19q6-11 15-11z"
      />
      <text
        x="123"
        y="80"
        fontSize="38"
        fontWeight="700"
        fontFamily="Liberation Sans"
        fill="#ececec"
        stroke="#b8b8b8"
        strokeWidth="0.8"
        textLength="44"
        lengthAdjust="spacingAndGlyphs"
      >
        du
      </text>
      <text x="191" y="87" fontSize="48" fontWeight="900" fontFamily="Noto Sans CJK SC" textLength="98" lengthAdjust="spacingAndGlyphs">
        经验
      </text>
      <text x="6" y="129" fontSize="32" fontFamily="Noto Sans" textLength="286" lengthAdjust="spacingAndGlyphs">
        jingyan.baidu.com
      </text>
    </svg>
  );
}

export default function App() {
  return (
    <div className={`relative flex h-[940px] w-[1615px] flex-col overflow-hidden bg-[#f3f3f3] text-[12px] leading-[18px] ${FONT}`}>
      <header className="relative z-10 h-[97px] shrink-0 bg-[#f3f3f3] shadow-[0_1px_5px_rgba(0,0,0,0.15)]">
        <MenuBar />
        <Ribbon />
        <div className="absolute left-[1310px] top-[20px] flex size-[50px] items-center justify-center rounded-[4px] bg-[#929292]">
          <svg width="24" height="28" viewBox="0 0 24 28" className="-mt-[6px] translate-y-[3px]">
            <path d="M5 0h14v5h3q1 1 1 3v8q-1 11-11 11T1 16V8q0-2 1-3h3z" fill="#f8f8f8" />
            <path d="M7 3h4M13 3h4" stroke="#929292" strokeWidth="1.800" />
          </svg>
        </div>
      </header>
      <div className="flex h-[843px]">
        <Canvas />
        <ScrollBar />
        <PropertyPanel />
        <SideBar />
      </div>
      <Watermark />
      <svg width="20" height="8" viewBox="0 0 20 8" className="absolute bottom-0 left-[1374px]">
        <path d="M7 2q2-4 5 0v3l6 0.500-3 2.500H2L1 6l5-1z" fill="#f7c948" stroke="#c98a12" />
      </svg>
    </div>
  );
}
